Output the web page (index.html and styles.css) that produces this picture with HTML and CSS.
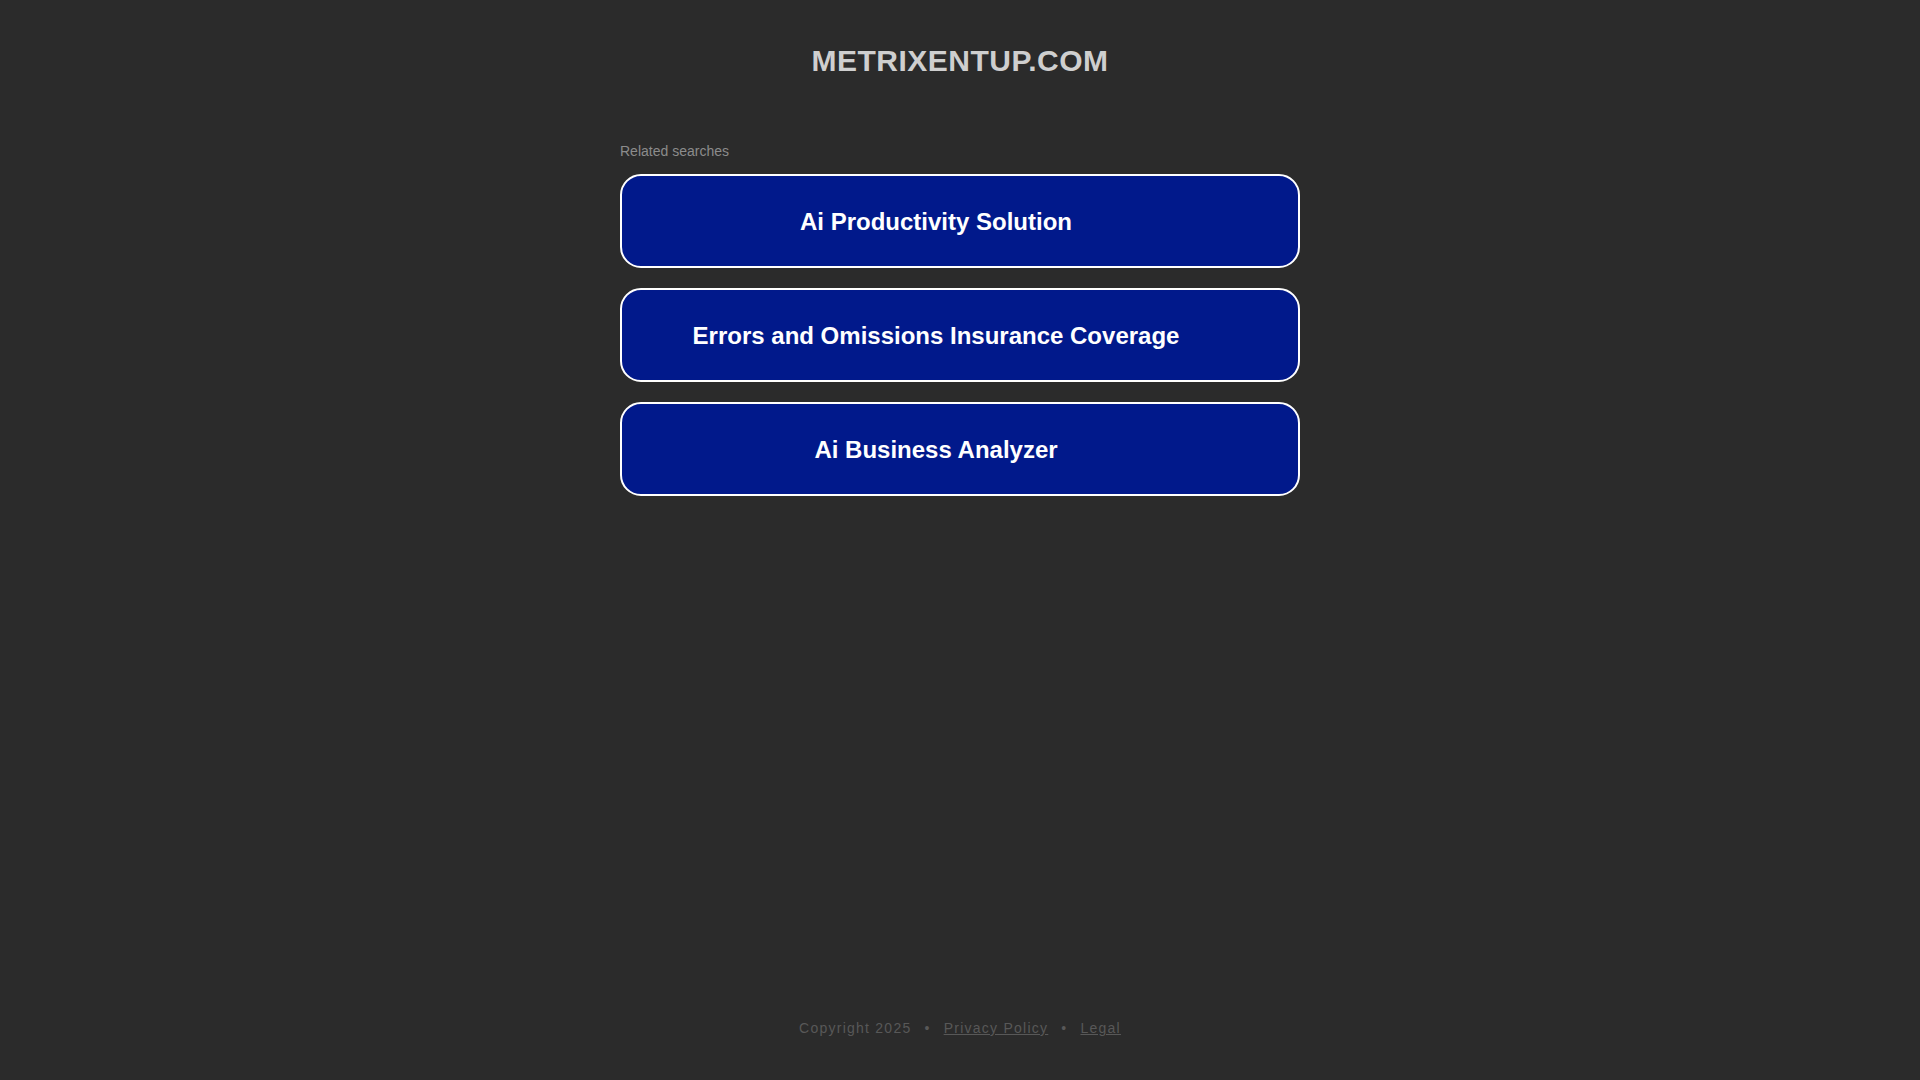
FILE: index.html
```html
<!DOCTYPE html>
<html lang="en">
<head>
<meta charset="utf-8">
<title>metrixentup.com</title>
<link rel="stylesheet" href="styles.css">
</head>
<body>
<div class="page">
  <main class="main">
    <h1 class="domain">METRIXENTUP.COM</h1>
    <div class="searches">
      <div class="label">Related searches</div>
      <a class="search" href="#">Ai Productivity Solution</a>
      <a class="search" href="#">Errors and Omissions Insurance Coverage</a>
      <a class="search" href="#">Ai Business Analyzer</a>
    </div>
  </main>
  <footer class="footer">
    <span>Copyright 2025</span><span class="sep">•</span><a href="#">Privacy Policy</a><span class="sep">•</span><a href="#">Legal</a>
  </footer>
</div>
</body>
</html>
```

FILE: styles.css
```css
html, body {
  margin: 0;
  padding: 0;
}
body {
  background: #2b2b2b;
  font-family: "Liberation Sans", Arial, sans-serif;
}
.page {
  min-height: 100vh;
  display: flex;
  flex-direction: column;
}
.main {
  flex: 1;
  display: flex;
  flex-direction: column;
  align-items: center;
}
.domain {
  margin: 0;
  padding-top: 43px;
  font-size: 30px;
  line-height: 36px;
  letter-spacing: 0.5px;
  font-weight: bold;
  color: #cfcfcf;
  text-align: center;
}
.searches {
  width: 680px;
  margin-top: 63px;
  display: flex;
  flex-direction: column;
}
.label {
  font-size: 14px;
  line-height: 18px;
  color: #8c8c8c;
  margin-bottom: 14px;
}
.search {
  box-sizing: border-box;
  height: 94px;
  margin-bottom: 20px;
  border: 2px solid #ffffff;
  border-radius: 21px;
  background: #01198b;
  color: #ffffff;
  text-decoration: none;
  font-size: 24px;
  font-weight: bold;
  display: flex;
  align-items: center;
  justify-content: center;
  padding-top: 2px;
  padding-right: 48px;
}
.footer {
  padding-bottom: 43px;
  text-align: center;
  font-size: 14px;
  line-height: 18px;
  letter-spacing: 1.25px;
  color: #585858;
}
.footer a {
  color: #585858;
  text-decoration: underline;
}
.sep {
  margin: 0 13px;
}
```
